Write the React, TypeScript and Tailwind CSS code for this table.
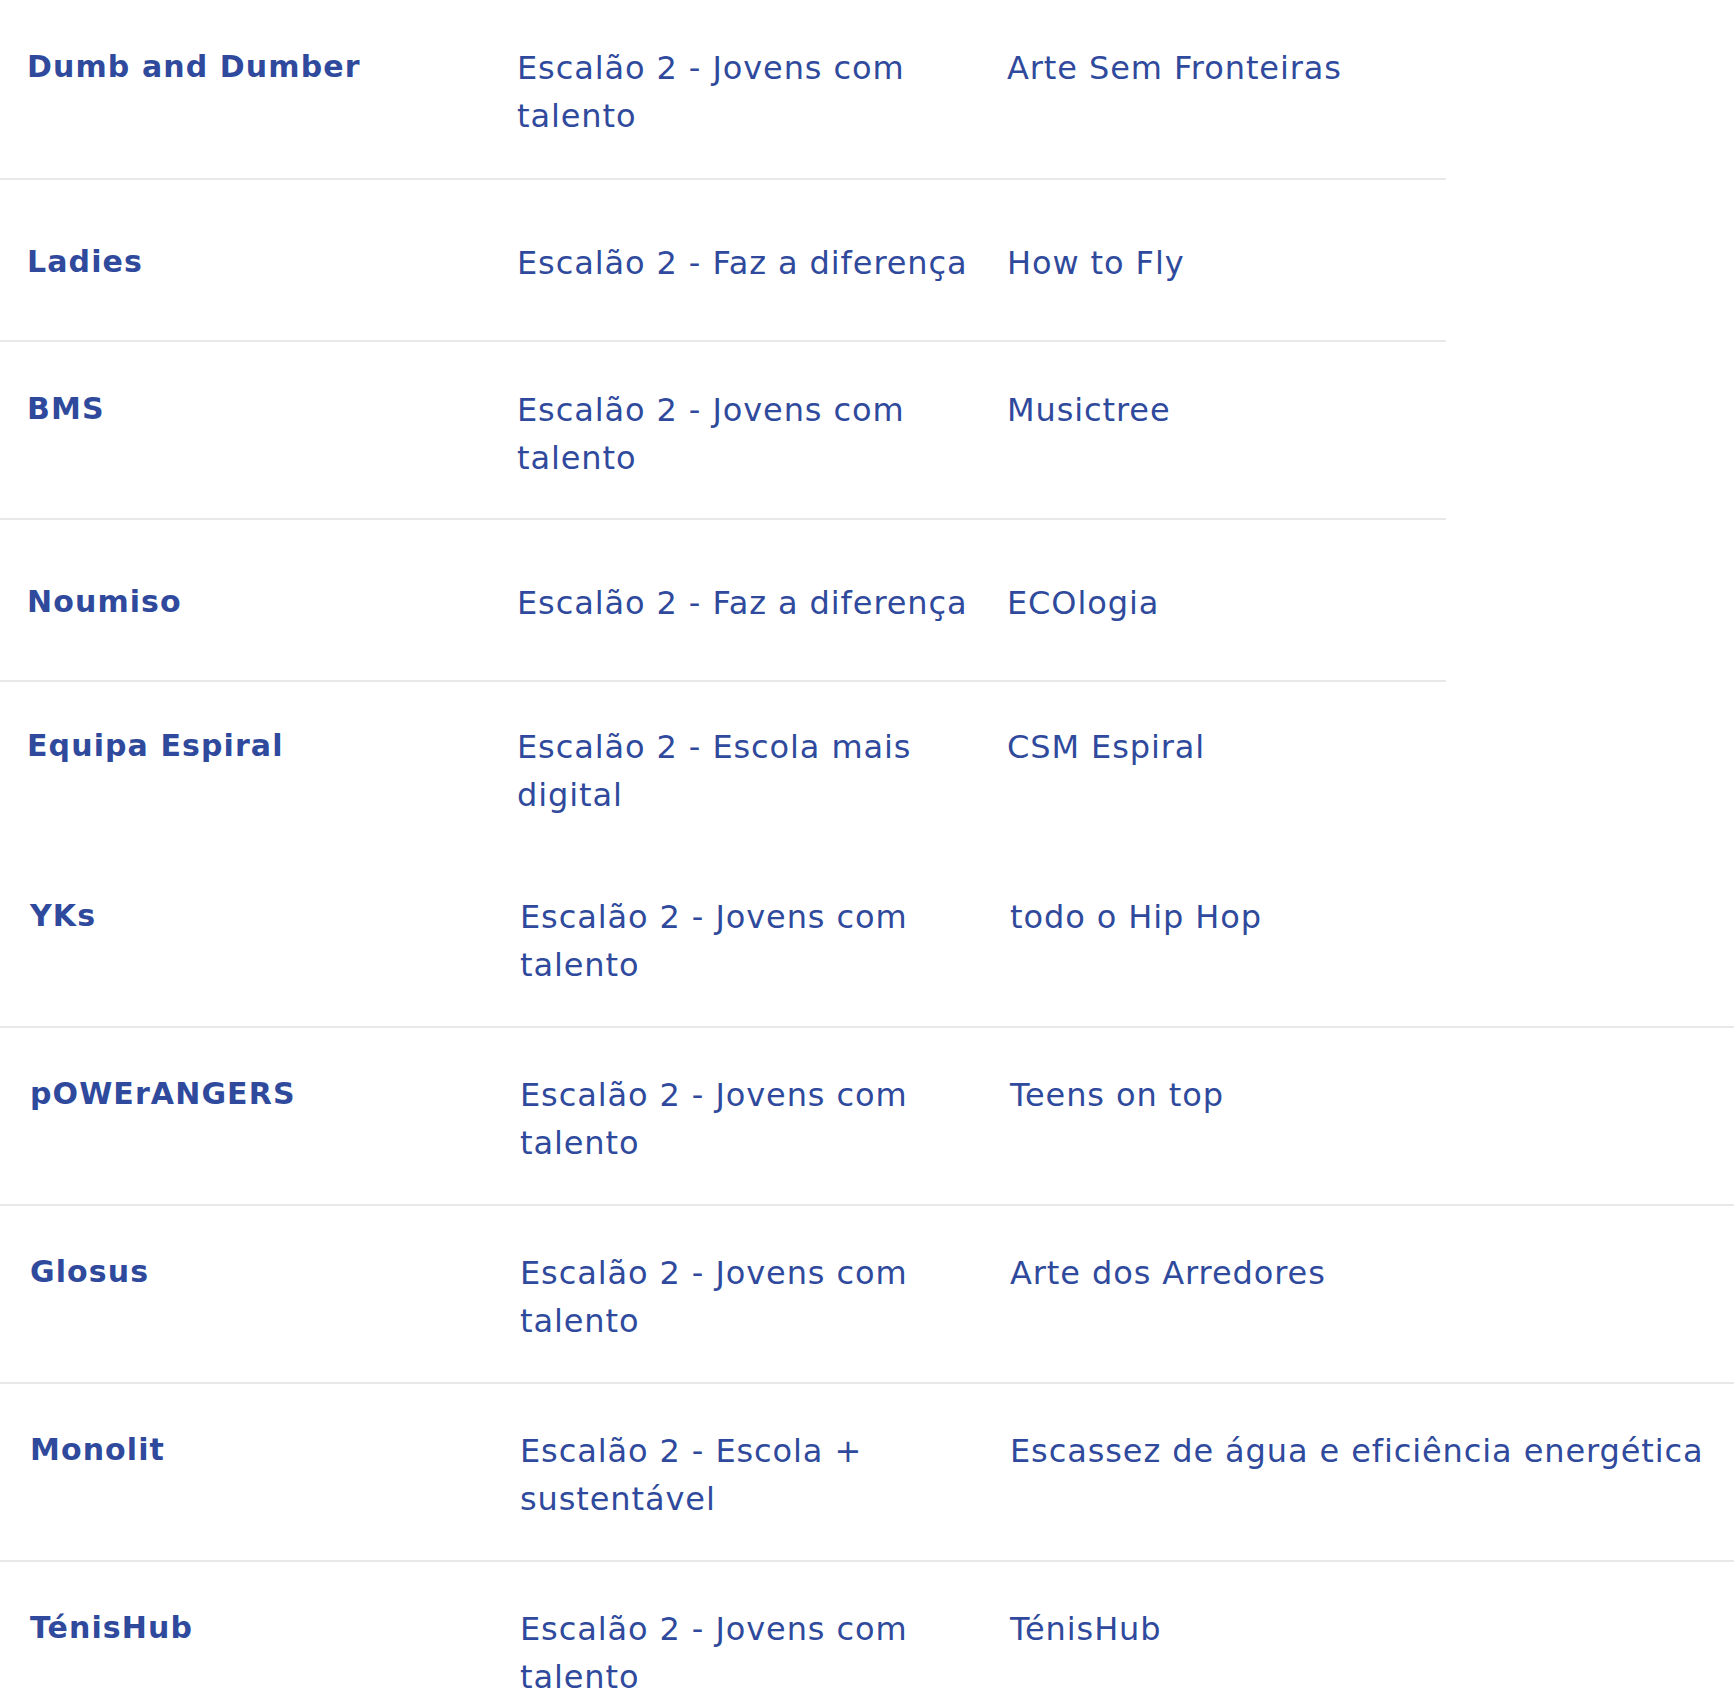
import React from 'react';

interface Team {
  name: string;
  tier: string;
  project: string;
}

const firstGroup: Team[] = [
  { name: 'Dumb and Dumber', tier: 'Escalão 2 - Jovens com talento', project: 'Arte Sem Fronteiras' },
  { name: 'Ladies', tier: 'Escalão 2 - Faz a diferença', project: 'How to Fly' },
  { name: 'BMS', tier: 'Escalão 2 - Jovens com talento', project: 'Musictree' },
  { name: 'Noumiso', tier: 'Escalão 2 - Faz a diferença', project: 'ECOlogia' },
  { name: 'Equipa Espiral', tier: 'Escalão 2 - Escola mais digital', project: 'CSM Espiral' },
];

const secondGroup: Team[] = [
  { name: 'YKs', tier: 'Escalão 2 - Jovens com talento', project: 'todo o Hip Hop' },
  { name: 'pOWErANGERS', tier: 'Escalão 2 - Jovens com talento', project: 'Teens on top' },
  { name: 'Glosus', tier: 'Escalão 2 - Jovens com talento', project: 'Arte dos Arredores' },
  { name: 'Monolit', tier: 'Escalão 2 - Escola + sustentável', project: 'Escassez de água e eficiência energética' },
  { name: 'TénisHub', tier: 'Escalão 2 - Jovens com talento', project: 'TénisHub' },
];

const Cells: React.FC<{ team: Team }> = ({ team }) => (
  <>
    <div className="text-[30px] leading-[45px] font-bold tracking-[1.1px]">{team.name}</div>
    <div className="pr-[15px] text-[32px] leading-[48px] tracking-[0.9px]">{team.tier}</div>
    <div className="text-[32px] leading-[48px] tracking-[0.9px]">{team.project}</div>
  </>
);

// padding per row of the first block (the first row sits 2px lower than the others)
const firstPadding = [
  'pt-[44px] pb-[38px]',
  'pt-[44px] pb-[38px]',
  'pt-[44px] pb-[36px]',
  'pt-[44px] pb-[38px]',
  'pt-[41px] pb-[31px]',
];

export default function App() {
  return (
    <div className="bg-white text-[#2f4a9c] font-['DejaVu_Sans',sans-serif] min-h-[1698px] overflow-hidden">
      {/* first block: narrower, rows have a min height */}
      <div className="w-[1446px]">
        {firstGroup.map((team, i) => {
          const last = i === firstGroup.length - 1;
          return (
            <div
              key={team.name}
              className={
                last
                  ? 'flex items-center'
                  : 'flex items-center min-h-[162px] border-b-2 border-[#e8e8e8]'
              }
            >
              <div
                className={`grid w-full grid-cols-[490px_490px_1fr] items-start pl-[27px] ${firstPadding[i]}`}
              >
                <Cells team={team} />
              </div>
            </div>
          );
        })}
      </div>

      {/* second block: full width */}
      <div className="w-full">
        {secondGroup.map((team) => (
          <div
            key={team.name}
            className="grid grid-cols-[490px_490px_1fr] items-start pl-[30px] pt-[43px] pb-[37px] border-b-2 border-[#e8e8e8]"
          >
            <Cells team={team} />
          </div>
        ))}
      </div>
    </div>
  );
}
